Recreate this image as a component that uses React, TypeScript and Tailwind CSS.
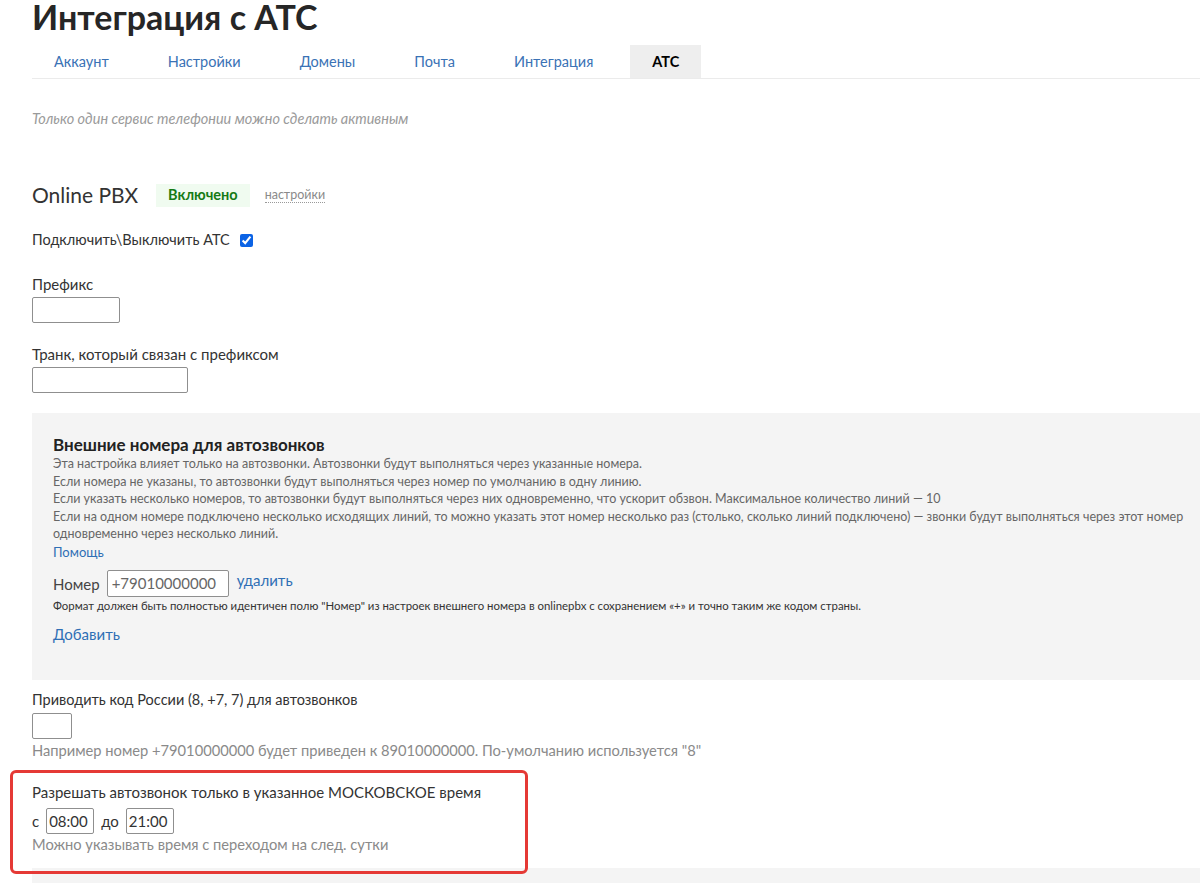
import { useState } from 'react';

const tabs = ['Аккаунт', 'Настройки', 'Домены', 'Почта', 'Интеграция', 'АТС'];

const noteLines = [
  'Эта настройка влияет только на автозвонки. Автозвонки будут выполняться через указанные номера.',
  'Если номера не указаны, то автозвонки будут выполняться через номер по умолчанию в одну линию.',
  'Если указать несколько номеров, то автозвонки будут выполняться через них одновременно, что ускорит обзвон. Максимальное количество линий — 10',
  'Если на одном номере подключено несколько исходящих линий, то можно указать этот номер несколько раз (столько, сколько линий подключено) — звонки будут выполняться через этот номер',
  'одновременно через несколько линий.',
];

export default function App() {
  const [active] = useState('АТС');
  const [enabled, setEnabled] = useState(true);

  return (
    <div className="h-[883px] overflow-hidden bg-white font-['Lato','Liberation_Sans',sans-serif] text-[#333]">
      <div className="pl-[32px]">
        <h1 className="pt-[1px] text-[34px] font-bold leading-[32px] text-[#262626]">Интеграция с АТС</h1>

        {/* tabs */}
        <nav className="mt-[12px] flex h-[34px] gap-[15px] border-b border-[#ebebeb]">
          {tabs.map((t) => (
            <div
              key={t}
              className={
                t === active
                  ? 'flex items-center bg-[#eeeeee] px-[22px] text-[14.5px] font-bold text-black'
                  : 'flex items-center px-[22px] text-[14.5px] text-[#3a72b5]'
              }
            >
              {t}
            </div>
          ))}
        </nav>

        <p className="mt-[30px] text-[14.5px] italic leading-[20px] text-[#9a9a9a]">
          Только один сервис телефонии можно сделать активным
        </p>

        <div className="mt-[53px] flex items-center">
          <span className="text-[21px] leading-[26px] text-[#333]">Online PBX</span>
          <span className="ml-[18px] flex h-[23px] items-center bg-[#f0fbf0] px-[12px] text-[14.5px] font-bold text-[#157a15]">
            Включено
          </span>
          <span className="ml-[15px] border-b border-dotted border-[#999] text-[12.5px] leading-[15px] text-[#8a8a8a]">
            настройки
          </span>
        </div>

        <label className="mt-[22px] flex items-center gap-[10px] text-[14.5px] leading-[20px]">
          Подключить\Выключить АТС
          <input
            type="checkbox"
            checked={enabled}
            onChange={() => setEnabled(!enabled)}
            className="h-[13px] w-[13px] accent-[#0b63e5]"
          />
        </label>

        <div className="mt-[24px] text-[15px] leading-[20px]">Префикс</div>
        <input className="mt-[3px] block h-[26px] w-[88px] rounded-[2px] border border-[#8f8f8f] bg-white" />

        <div className="mt-[21px] text-[15px] leading-[20px]">Транк, который связан с префиксом</div>
        <input className="mt-[3px] block h-[26px] w-[156px] rounded-[2px] border border-[#8f8f8f] bg-white" />

        {/* external numbers box */}
        <section className="mt-[20px] h-[267px] bg-[#f4f4f4] pl-[21px] pt-[22px]">
          <h2 className="text-[17px] font-bold leading-[20px] text-[#222]">Внешние номера для автозвонков</h2>
          <div className="text-[12.5px] leading-[17.5px] text-[#666]">
            {noteLines.map((l) => (
              <div key={l}>{l}</div>
            ))}
          </div>
          <div className="text-[13px] leading-[18px] text-[#2f6fb5]">Помощь</div>

          <div className="mt-[9px] flex items-start">
            <span className="mt-[4px] text-[15px] leading-[20px] text-[#444]">Номер</span>
            <input
              defaultValue="+79010000000"
              className="ml-[7px] h-[27px] w-[122px] rounded-[2px] border border-[#8f8f8f] bg-white px-[4px] text-[15px] text-[#666]"
            />
            <span className="ml-[8px] text-[15px] leading-[20px] text-[#2f6fb5]">удалить</span>
          </div>
          <p className="mt-[1px] text-[11.4px] leading-[16px] text-[#333]">
            Формат должен быть полностью идентичен полю "Номер" из настроек внешнего номера в onlinepbx с сохранением «+» и точно таким же кодом страны.
          </p>
          <div className="mt-[10px] text-[15px] leading-[20px] text-[#2f6fb5]">Добавить</div>
        </section>

        <div className="mt-[10px] text-[14.5px] leading-[20px]">Приводить код России (8, +7, 7) для автозвонков</div>
        <input className="mt-[3px] block h-[26px] w-[40px] rounded-[2px] border border-[#8f8f8f] bg-white" />
        <p className="mt-[1px] text-[14.7px] leading-[20px] text-[#8a8a8a]">
          Например номер +79010000000 будет приведен к 89010000000. По-умолчанию используется "8"
        </p>

        {/* moscow time section, highlighted */}
        <div className="relative mt-[10px]">
          <div className="pt-[12px] pb-[14px]">
            <div className="text-[15px] leading-[20px]">Разрешать автозвонок только в указанное МОСКОВСКОЕ время</div>
            <div className="mt-[6px] flex items-center text-[15px]">
              <span>с</span>
              <input
                defaultValue="08:00"
                className="ml-[7px] h-[26px] w-[48px] rounded-[2px] border border-[#8f8f8f] bg-white px-[2px] text-[15px] text-[#333]"
              />
              <span className="ml-[7px]">до</span>
              <input
                defaultValue="21:00"
                className="ml-[7px] h-[26px] w-[48px] rounded-[2px] border border-[#8f8f8f] bg-white px-[2px] text-[15px] text-[#333]"
              />
            </div>
            <div className="text-[14.7px] leading-[20px] text-[#8a8a8a]">Можно указывать время с переходом на след. сутки</div>
          </div>
          <div className="h-[30px] bg-[#f4f4f4]" />
          <div className="pointer-events-none absolute left-[-22px] top-0 h-[104px] w-[518px] rounded-[6px] border-[3px] border-[#e53935]" />
        </div>
      </div>
    </div>
  );
}
